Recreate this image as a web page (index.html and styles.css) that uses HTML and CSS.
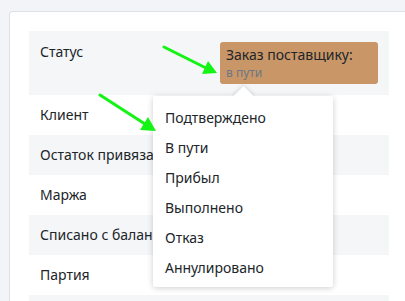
FILE: index.html
```html
<!DOCTYPE html>
<html lang="ru">
<head>
    <meta charset="UTF-8">
    <meta name="viewport" content="width=device-width, initial-scale=1.0">
    <title>Заказ поставщику</title>
    <link rel="stylesheet" href="styles.css">
</head>
<body>
    <div class="card">
        <div class="props">
            <div class="row row-status">
                <div class="label">Статус</div>
                <div class="value">
                    <div class="status-badge">
                        <div class="status-title">Заказ поставщику:</div>
                        <div class="status-sub">в пути</div>
                    </div>
                </div>
            </div>
            <div class="row"><div class="label">Клиент</div></div>
            <div class="row"><div class="label">Остаток привязанных</div></div>
            <div class="row"><div class="label">Маржа</div></div>
            <div class="row"><div class="label">Списано с баланса</div></div>
            <div class="row"><div class="label">Партия</div></div>
            <div class="row row-last"></div>
        </div>
    </div>

    <div class="dropdown">
        <ul class="dropdown-list">
            <li class="dropdown-item">Подтверждено</li>
            <li class="dropdown-item">В пути</li>
            <li class="dropdown-item">Прибыл</li>
            <li class="dropdown-item">Выполнено</li>
            <li class="dropdown-item">Отказ</li>
            <li class="dropdown-item">Аннулировано</li>
        </ul>
    </div>

    <!-- annotation arrows -->
    <svg class="annotations" width="405" height="301" viewBox="0 0 405 301">
        <g stroke="#14f414" stroke-width="3" stroke-linecap="round" fill="#14f414">
            <line x1="164" y1="47" x2="206" y2="68" />
            <polygon stroke="none" points="217,73 202,74 208,61" />
            <line x1="100" y1="95" x2="145" y2="124" />
            <polygon stroke="none" points="156,131 140,130 148,117" />
        </g>
    </svg>
</body>
</html>
```

FILE: styles.css
```css
:root {
    --page-bg: #f2f4f7;
    --card-bg: #ffffff;
    --card-border: #dde0e4;
    --row-alt: #f4f6f8;
    --text-primary: #212529;
    --text-muted: #6c7784;
    --badge-bg: #c99667;
}

* {
    margin: 0;
    padding: 0;
    box-sizing: border-box;
}

html,
body {
    width: 405px;
    height: 301px;
    overflow: hidden;
}

body {
    font-family: 'Noto Sans', 'Open Sans', sans-serif;
    font-size: 14px;
    color: var(--text-primary);
    background: var(--page-bg);
    padding: 11px 0 0 9px;
}

.card {
    width: 400px;
    height: 290px;
    background: var(--card-bg);
    border: 1px solid var(--card-border);
    border-right: none;
    border-bottom: none;
    border-radius: 4px 0 0 0;
    padding: 19px 0 0 19px;
    overflow: hidden;
}

.props {
    width: 360px;
}

.row {
    display: flex;
    align-items: center;
    height: 40px;
    padding-left: 11px;
}

.row:nth-child(odd) {
    background: var(--row-alt);
}

.row-status {
    height: 64px;
    align-items: flex-start;
    padding-top: 11px;
}

.row-last {
    height: 6px;
}

.label {
    width: 180px;
    line-height: 20px;
    white-space: nowrap;
}

.status-badge {
    width: 158px;
    height: 42px;
    background: var(--badge-bg);
    border-radius: 3px;
    padding: 3px 6px 0;
}

.status-title {
    font-size: 14px;
    line-height: 19px;
}

.status-sub {
    font-size: 12px;
    line-height: 17px;
    color: var(--text-muted);
}

.dropdown {
    position: absolute;
    left: 153px;
    top: 96px;
    width: 180px;
    height: 191px;
    border-radius: 3px;
    background: #fff;
    box-shadow: 0 1px 6px rgba(0, 0, 0, 0.2);
}

.dropdown::before {
    content: '';
    position: absolute;
    left: 83px;
    top: -7px;
    width: 15px;
    height: 15px;
    background: #fff;
    transform: rotate(45deg);
    box-shadow: -1px -1px 4px rgba(0, 0, 0, 0.12);
}

.dropdown-list {
    position: relative;
    list-style: none;
    height: 100%;
    background: #fff;
    border-radius: 3px;
    padding-top: 7px;
}

.dropdown-item {
    height: 30px;
    line-height: 30px;
    padding-left: 12px;
    white-space: nowrap;
}

.annotations {
    position: absolute;
    left: 0;
    top: 0;
    pointer-events: none;
}
```
